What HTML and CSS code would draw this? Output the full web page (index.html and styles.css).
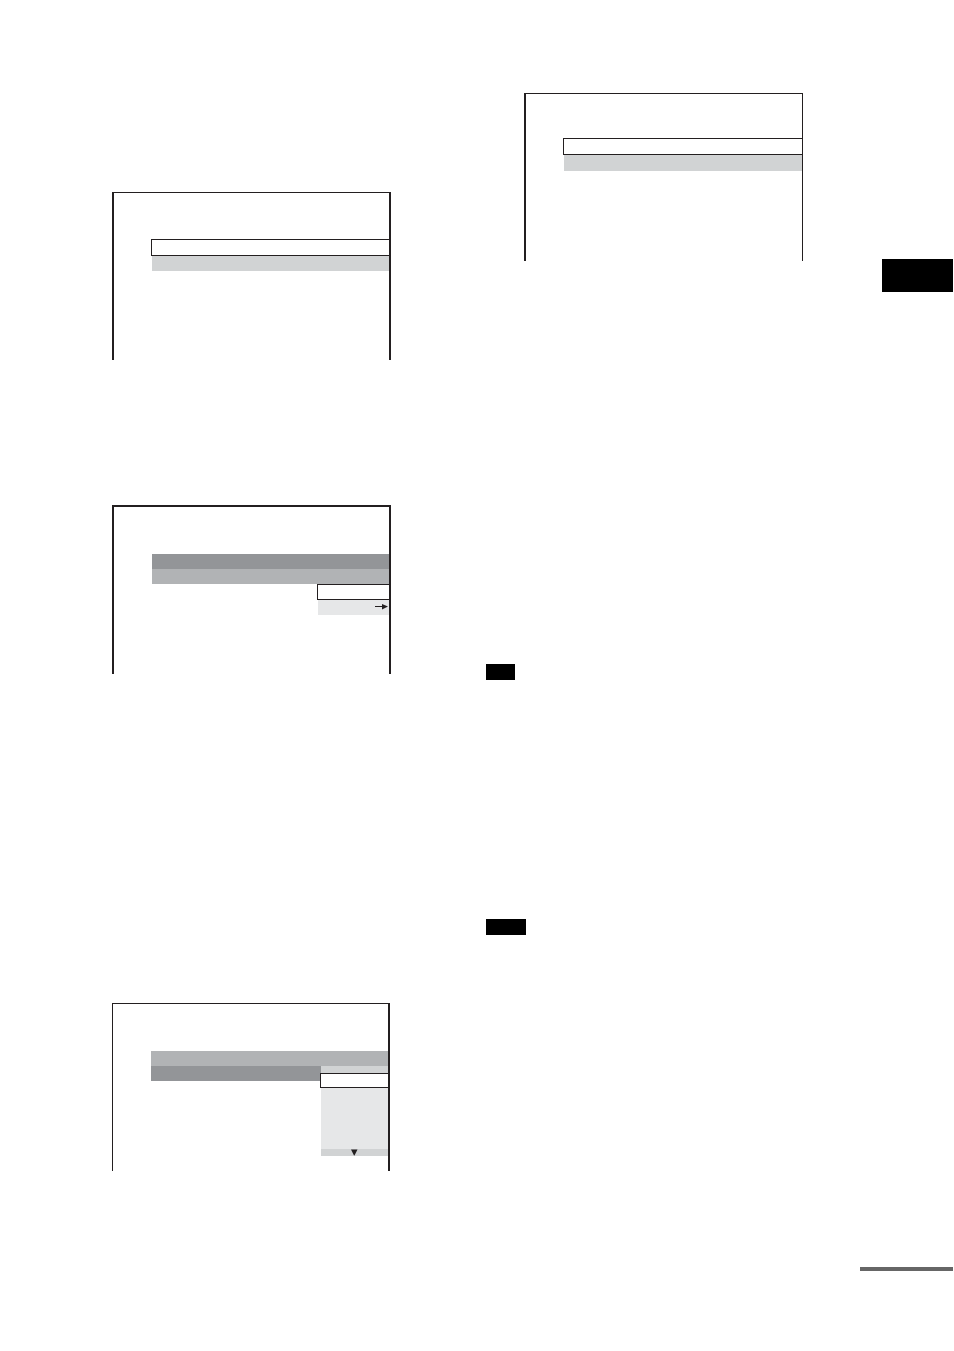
FILE: index.html
```html
<!DOCTYPE html>
<html lang="en">
<head>
<meta charset="utf-8">
<meta name="viewport" content="width=device-width, initial-scale=1">
<title>Setup menus</title>
<link rel="stylesheet" href="styles.css">
</head>
<body>
<main class="page">
  <section class="column column-left">
    <div class="screen screen-basic">
      <div class="choice"></div>
      <div class="bar bar-light"></div>
    </div>
    <div class="screen screen-submenu">
      <div class="bar bar-dark"></div>
      <div class="bar bar-mid"></div>
      <div class="submenu">
        <div class="choice choice-short"></div>
        <div class="submenu-next">
          <svg class="arrow" viewBox="0 0 13 7" aria-hidden="true"><path d="M0 2h7V0l6 2.500-6 3V3H0z"/></svg>
        </div>
      </div>
    </div>
    <div class="screen screen-list">
      <div class="bar bar-mid"></div>
      <div class="list-row">
        <div class="bar bar-dark"></div>
        <div class="list">
          <div class="list-cap"></div>
          <div class="choice choice-list"></div>
          <div class="list-body"></div>
          <div class="list-cap">
            <svg class="down" viewBox="0 0 7 7" aria-hidden="true"><path d="M0 .5h6.500L3.500 6.500H3z"/></svg>
          </div>
        </div>
      </div>
    </div>
  </section>
  <section class="column column-right">
    <div class="screen screen-second">
      <div class="choice"></div>
      <div class="bar bar-light bar-tall"></div>
    </div>
    <div class="tag tag-short"></div>
    <div class="tag tag-long"></div>
  </section>
  <aside class="column column-side">
    <div class="tab"></div>
    <div class="rule"></div>
  </aside>
</main>
</body>
</html>
```

FILE: styles.css
```css
* {
  box-sizing: border-box;
}

body {
  margin: 0;
  background: #fff;
  font-family: "Liberation Sans", sans-serif;
}

.page {
  display: grid;
  grid-template-columns: 279fr 95px 317fr 57px 93px;
  min-height: 100vh;
  padding: 0 1px 80px 112px;
}

.column {
  display: flex;
  flex-direction: column;
}

.column-left {
  grid-column: 1;
  padding-top: 192px;
}

.column-right {
  grid-column: 3;
  padding-top: 93px;
}

.column-side {
  grid-column: 5;
  padding-top: 259px;
}

.screen {
  min-height: 168px;
  border: 2px solid #231f20;
  border-top-width: 1px;
  border-bottom: 0;
}

.screen-basic {
  padding: 46px 0 0 37px;
}

.screen-submenu {
  min-height: 169px;
  margin-top: 145px;
  padding: 47px 0 0 38px;
  border-top-width: 2px;
}

.screen-list {
  margin: 329px 1px 0 0;
  padding: 47px 0 0 38px;
  border-left-width: 1px;
}

.screen-second {
  margin-left: 38px;
  padding: 44px 0 0 37px;
  border-right-width: 1px;
}

.choice {
  height: 17px;
  border: 1px solid #231f20;
  border-right: 0;
  background: #fff;
}

.choice-short {
  height: 16px;
}

.choice-list {
  height: 15px;
  margin-left: -1px;
}

.bar {
  height: 15px;
}

.bar-tall {
  height: 16px;
}

.bar-light {
  margin-left: 1px;
  background: #d1d3d4;
}

.bar-mid {
  background: #b1b3b5;
}

.bar-dark {
  background: #939598;
}

.submenu {
  width: 72px;
  margin-left: auto;
}

.submenu-next {
  display: flex;
  align-items: center;
  justify-content: flex-end;
  height: 15px;
  margin-left: 1px;
  padding-right: 1px;
  background: #e6e7e8;
}

.arrow {
  width: 13px;
  height: 7px;
  fill: #231f20;
}

.list-row {
  display: flex;
  align-items: flex-start;
}

.list-row .bar {
  flex: 1;
}

.list {
  width: 67px;
}

.list-cap {
  display: flex;
  justify-content: center;
  height: 7px;
  background: #d1d3d4;
}

.list-body {
  height: 61px;
  background: #e6e7e8;
}

.down {
  width: 7px;
  height: 7px;
  fill: #231f20;
}

.tag {
  height: 16px;
  background: #000;
}

.tag-short {
  width: 29px;
  margin-top: 403px;
}

.tag-long {
  width: 40px;
  margin-top: 239px;
}

.tab {
  height: 33px;
  margin-left: 22px;
  background: #000;
}

.rule {
  height: 4px;
  margin-top: auto;
  background: #666;
}
```
